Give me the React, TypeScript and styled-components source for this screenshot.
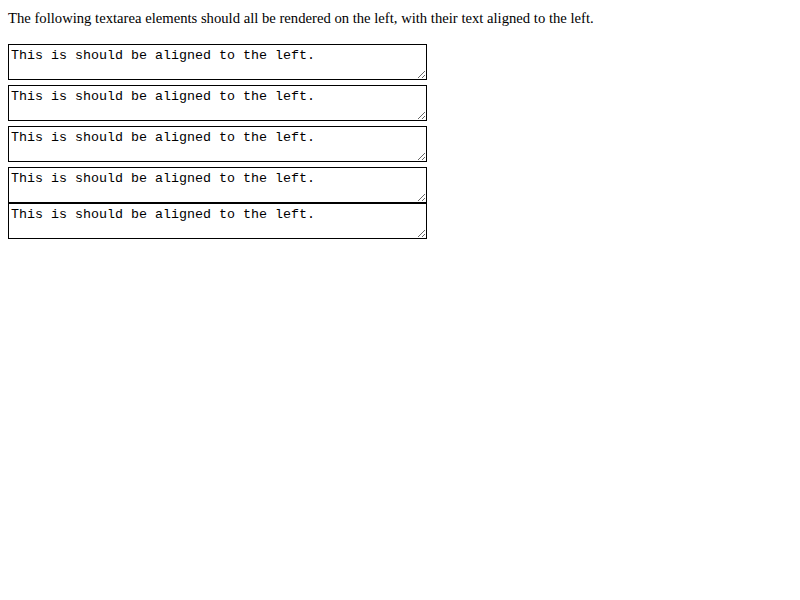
import React from "react";
import styled, { createGlobalStyle } from "styled-components";

const Global = createGlobalStyle`
  html, body { margin: 0; padding: 0; background: #ffffff; }
`;

const Page = styled.div`
  padding: 8px;
  font-family: "Liberation Serif", "Times New Roman", serif;
  font-size: 11pt;
  color: #000000;
`;

const Intro = styled.p`
  margin: 0 0 16px 0;
  line-height: 20px;
`;

const Stack = styled.div`
  display: flex;
  flex-direction: column;
  align-items: flex-start;
`;

const Area = styled.textarea<{ $gap: number }>`
  display: block;
  box-sizing: border-box;
  width: 419px;
  height: 36px;
  margin: 0 0 ${(p) => p.$gap}px 0;
  padding: 3px 2px 1px 2px;
  border: 1px solid #000000;
  border-radius: 0;
  background: #ffffff;
  color: #000000;
  font-family: "Liberation Mono", "Courier New", monospace;
  font-size: 13.333px;
  line-height: 15px;
  text-align: left;
  overflow: hidden;
  resize: both;
  outline: none;
`;

const TEXT = "This is should be aligned to the left.";
const gaps = [5, 5, 5, 0, 0];

export default function App() {
  return (
    <>
      <Global />
      <Page>
        <Intro>
          The following textarea elements should all be rendered on the left, with their text aligned to the left.
        </Intro>
        <Stack>
          {gaps.map((g, i) => (
            <Area key={i} $gap={g} defaultValue={TEXT} readOnly />
          ))}
        </Stack>
      </Page>
    </>
  );
}
